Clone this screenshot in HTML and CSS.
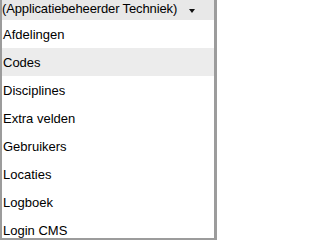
FILE: index.html
```
<!DOCTYPE html>
<html>
<head>
<meta charset="utf-8">
<link rel="stylesheet" href="styles.css">
</head>
<body>
<div class="panel">
  <div class="header">
    <span class="title">(Applicatiebeheerder Techniek)</span>
    <span class="caret"></span>
  </div>
  <ul class="list">
    <li class="item">Afdelingen</li>
    <li class="item active">Codes</li>
    <li class="item">Disciplines</li>
    <li class="item">Extra velden</li>
    <li class="item">Gebruikers</li>
    <li class="item">Locaties</li>
    <li class="item">Logboek</li>
    <li class="item">Login CMS</li>
  </ul>
</div>
</body>
</html>
```
FILE: styles.css
```
html, body {
  margin: 0;
  padding: 0;
  background: #ffffff;
}
.panel {
  width: 217px;
  height: 240px;
  box-sizing: border-box;
  border-left: 2px solid #9c9c9c;
  border-right: 3px solid #9c9c9c;
  border-bottom: 2px solid #9c9c9c;
  overflow: hidden;
  font-family: "Liberation Sans", Arial, sans-serif;
  font-size: 13px;
  color: #000000;
}
.header {
  height: 20px;
  background: #e8e8e8;
  display: flex;
  align-items: center;
  white-space: nowrap;
}
.title {
  line-height: 18px;
  margin-top: -2px;
  letter-spacing: -0.13px;
}
.caret {
  width: 0;
  height: 0;
  border-left: 3.5px solid transparent;
  border-right: 3.5px solid transparent;
  border-top: 4px solid #111111;
  margin-left: 12px;
  margin-top: 1px;
}
.list {
  list-style: none;
  margin: 0;
  padding: 0;
}
.item {
  height: 28px;
  line-height: 29px;
  padding-left: 1px;
  white-space: nowrap;
}
.item.active {
  background: #ececec;
}
```
